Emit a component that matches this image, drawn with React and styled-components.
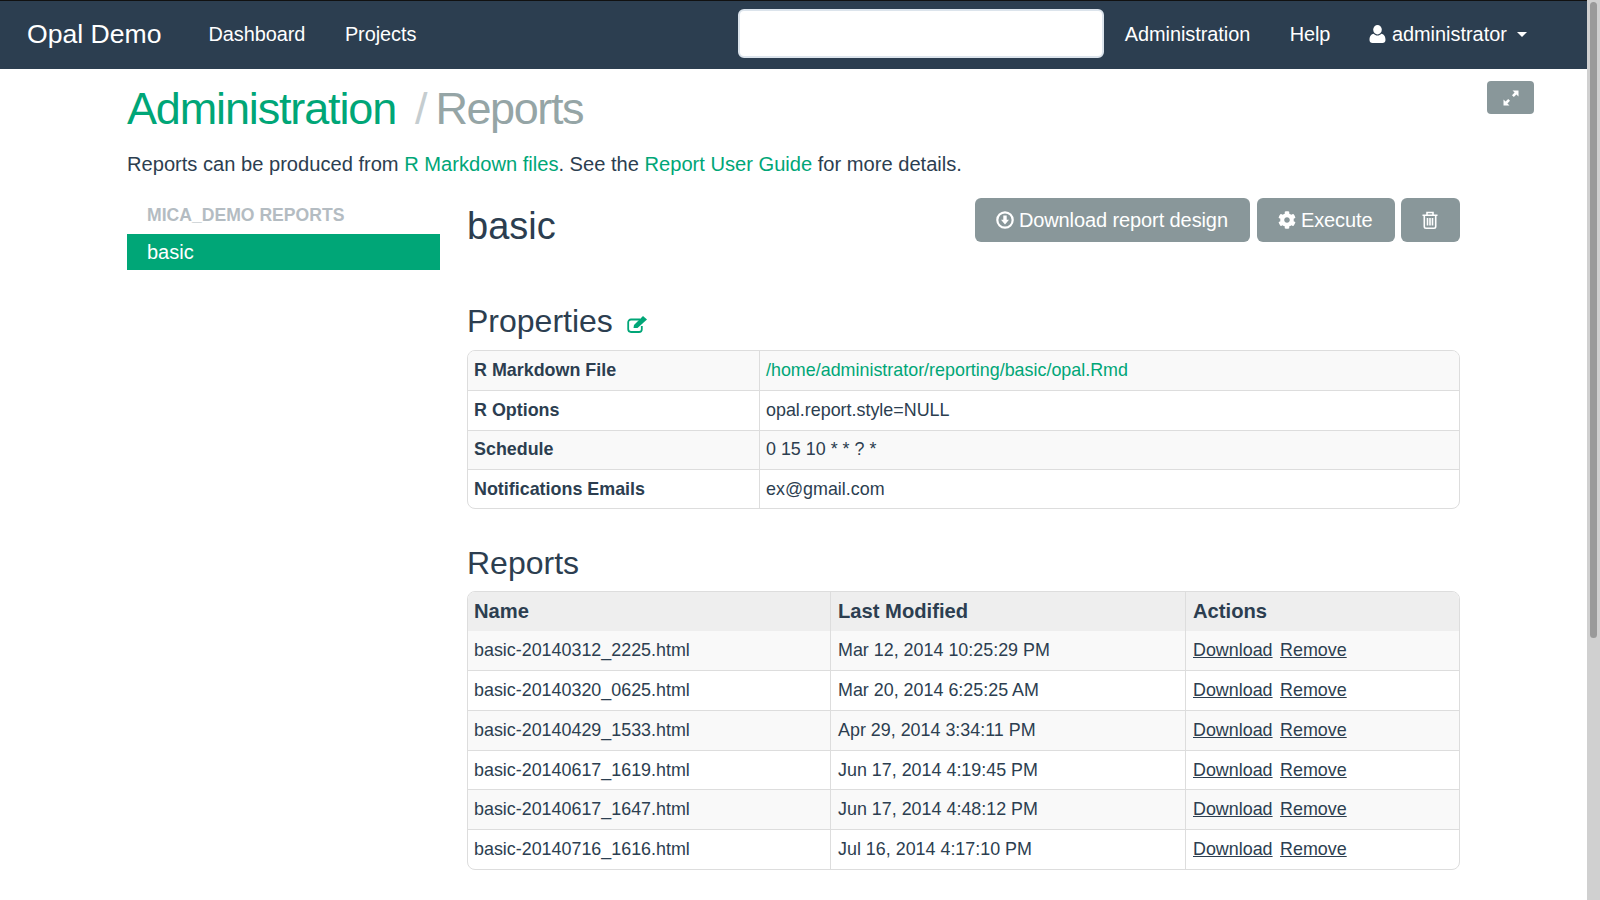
import React from 'react'
import styled, { createGlobalStyle } from 'styled-components'
import { FaCog } from 'react-icons/fa'

const rows = [
    ['basic-20140312_2225.html', 'Mar 12, 2014 10:25:29 PM'],
    ['basic-20140320_0625.html', 'Mar 20, 2014 6:25:25 AM'],
    ['basic-20140429_1533.html', 'Apr 29, 2014 3:34:11 PM'],
    ['basic-20140617_1619.html', 'Jun 17, 2014 4:19:45 PM'],
    ['basic-20140617_1647.html', 'Jun 17, 2014 4:48:12 PM'],
    ['basic-20140716_1616.html', 'Jul 16, 2014 4:17:10 PM'],
]

const props = [
    ['R Markdown File', '/home/administrator/reporting/basic/opal.Rmd', true],
    ['R Options', 'opal.report.style=NULL'],
    ['Schedule', '0 15 10 * * ? *'],
    ['Notifications Emails', 'ex@gmail.com'],
]

function App() {
    return (
        <Page>
            <GlobalStyle />
            <Navbar>
                <Brand>Opal Demo</Brand>
                <NavLink>Dashboard</NavLink>
                <NavLink>Projects</NavLink>
                <Search />
                <NavLink>Administration</NavLink>
                <NavLink>Help</NavLink>
                <UserMenu>
                    <svg width="17" height="18" viewBox="0 0 17 18" fill="#fff">
                        <ellipse cx="8.500" cy="4.800" rx="4.300" ry="4.700" />
                        <path d="M0.500 15c0-4 2-5.800 4.200-6.200 1 1.200 2.300 1.800 3.800 1.800s2.800-.6 3.800-1.800c2.200.4 4.200 2.200 4.200 6.200 0 2-1.300 3-3 3H3.500c-1.700 0-3-1-3-3z" />
                    </svg>
                    <span>administrator</span>
                    <Caret />
                </UserMenu>
            </Navbar>
            <Content>
                <ExpandBtn>
                    <svg width="16" height="16" viewBox="0 0 16 16" fill="#fff">
                        <path d="M9.500 .5h6v6l-2.100-2.100-2.600 2.600-1.800-1.800 2.600-2.600zM6.500 15.500h-6v-6l2.100 2.100 2.600-2.600 1.800 1.800-2.600 2.600z" />
                    </svg>
                </ExpandBtn>
                <Title>
                    <a>Administration</a>
                    <Slash>/</Slash>
                    <Crumb>Reports</Crumb>
                </Title>
                <Intro>
                    Reports can be produced from <TextLink>R Markdown files</TextLink>. See the <TextLink>Report User Guide</TextLink> for more details.
                </Intro>
                <Columns>
                    <Sidebar>
                        <SideHeader>MICA_DEMO REPORTS</SideHeader>
                        <SideItem>basic</SideItem>
                    </Sidebar>
                    <Main>
                        <MainHead>
                            <h2>basic</h2>
                            <Actions>
                                <Button>
                                    <svg width="18" height="18" viewBox="0 0 18 18" fill="none" stroke="#fff">
                                        <circle cx="9" cy="9" r="7.700" strokeWidth="2.200" />
                                        <path d="M7.300 4.500h3.400v4.200h2.300L9 13.500 5 8.700h2.300z" fill="#fff" stroke="none" />
                                    </svg>
                                    Download report design
                                </Button>
                                <Button>
                                    <FaCog size={18} />
                                    Execute
                                </Button>
                                <Button>
                                    <svg width="16" height="18" viewBox="0 0 16 18" fill="none" stroke="#fff" strokeWidth="1.600">
                                        <path d="M.5 4.200h15M5 4V1.500h6V4M2.300 4.200v11.300c0 1 .7 1.700 1.700 1.700h8c1 0 1.700-.7 1.700-1.700V4.200M5.500 7v7.500M8 7v7.500M10.500 7v7.500" />
                                    </svg>
                                </Button>
                            </Actions>
                        </MainHead>
                        <SectionTitle $top={51} $bottom={8}>
                            Properties
                            <EditIcon width="21" height="17" viewBox="0 0 21 17" fill="none">
                                <path d="M13 3.500H4A2.800 2.800 0 0 0 1.200 6.300v7A2.800 2.800 0 0 0 4 16h8a2.800 2.800 0 0 0 2.800-2.800V10" stroke="#00a677" strokeWidth="1.800" />
                                <path d="M6.500 12 7 9 16 0l4 3.500-9.500 8.500z" fill="#00a677" />
                            </EditIcon>
                        </SectionTitle>
                        <Table $rowHeight={39.3} $gutter={6}>
                            <tbody>
                                {props.map(([label, value, link]) => (
                                    <tr key={label}>
                                        <th style={{ width: 291 }}>{label}</th>
                                        <td>{link ? <TextLink>{value}</TextLink> : value}</td>
                                    </tr>
                                ))}
                            </tbody>
                        </Table>
                        <SectionTitle $top={33} $bottom={7}>Reports</SectionTitle>
                        <Table $rowHeight={39.7} $gutter={7}>
                            <thead>
                                <tr>
                                    <th style={{ width: 362 }}>Name</th>
                                    <th style={{ width: 355 }}>Last Modified</th>
                                    <th>Actions</th>
                                </tr>
                            </thead>
                            <tbody>
                                {rows.map(([name, date]) => (
                                    <tr key={name}>
                                        <td>{name}</td>
                                        <td>{date}</td>
                                        <td>
                                            <RowLink>Download</RowLink>
                                            <RowLink>Remove</RowLink>
                                        </td>
                                    </tr>
                                ))}
                            </tbody>
                        </Table>
                    </Main>
                </Columns>
            </Content>
            <ScrollTrack>
                <ScrollThumb />
            </ScrollTrack>
        </Page>
    )
}

export default App

const GlobalStyle = createGlobalStyle`
body{
    margin:0;
    font-family:"Liberation Sans",Arial,sans-serif;
    color:#2c3e50;
    background:#fff;
}
`
const Page = styled.div`
min-height:1270px;
padding-right:13px;
`
const ScrollTrack = styled.div`
position:fixed;
top:0;
right:0;
bottom:0;
width:13px;
background:#d0d0d0;
`
const ScrollThumb = styled.div`
width:7px;
height:636px;
margin:2px 0 0 3px;
background:#9a9a9a;
border-radius:4px;
`
const Navbar = styled.div`
display:flex;
align-items:center;
height:66px;
background:#2c3e50;
border-top:1px solid #111;
padding:0 0 2px 27px;
color:#fff;
`
const Brand = styled.a`
font-size:26.600px;
margin-right:47px;
`
const NavLink = styled.a`
font-size:19.900px;
letter-spacing:-.05px;
margin-right:39.500px;
`
const Search = styled.div`
width:366px;
height:49px;
box-sizing:border-box;
margin:-1px 21px 0 282px;
background:#fff;
border-radius:6px;
border:2px solid #dce4ec;
`
const UserMenu = styled.a`
display:flex;
align-items:center;
gap:6px;
margin-left:-1px;
font-size:19.900px;
`
const Caret = styled.span`
width:0;
height:0;
margin-left:4px;
border-left:5px solid transparent;
border-right:5px solid transparent;
border-top:5px solid #fff;
`
const Content = styled.div`
position:relative;
padding:0 127px;
`
const ExpandBtn = styled.div`
position:absolute;
top:12px;
right:53px;
width:47px;
height:33px;
display:flex;
align-items:center;
justify-content:center;
background:#89979a;
border-radius:4px;
`
const Title = styled.h1`
margin:0;
padding-top:14px;
font-size:45px;
line-height:52px;
font-weight:400;
letter-spacing:-1.150px;
color:#95a5a6;
a{
    color:#00a677;
}
`
const Crumb = styled.span`
letter-spacing:-1.400px;
`
const Slash = styled.span`
color:#c5cdd0;
margin:0 9px 0 19px;
`
const Intro = styled.p`
margin:15px 0 0;
font-size:20.130px;
line-height:28px;
`
const TextLink = styled.a`
color:#00a677;
`
const Columns = styled.div`
display:flex;
margin-top:16px;
`
const Sidebar = styled.div`
width:313px;
flex:none;
padding-top:7px;
`
const SideHeader = styled.div`
padding:0 20px;
height:28px;
line-height:28px;
font-size:17.600px;
font-weight:700;
color:#b4bcc2;
`
const SideItem = styled.div`
margin-top:5px;
height:36px;
line-height:36px;
padding:0 20px;
font-size:20px;
color:#fff;
background:#00a677;
`
const Main = styled.div`
flex:1;
margin-left:27px;
padding-top:4px;
h2{
    margin:0;
    padding-top:5px;
    font-size:38px;
    line-height:46px;
    font-weight:400;
}
`
const MainHead = styled.div`
display:flex;
justify-content:space-between;
align-items:flex-start;
`
const Actions = styled.div`
display:flex;
gap:6.500px;
`
const Button = styled.div`
display:flex;
align-items:center;
gap:4.500px;
height:44px;
padding:0 22px 0 21px;
font-size:20px;
letter-spacing:-.1px;
color:#fff;
background:#89979a;
border-radius:6px;
&:first-child{
    margin-right:1px;
}
`
const SectionTitle = styled.h3`
display:flex;
align-items:center;
gap:14px;
margin:${(p) => p.$top}px 0 ${(p) => p.$bottom}px;
font-size:32px;
line-height:42px;
font-weight:400;
`
const EditIcon = styled.svg`
margin-top:6px;
`
const Table = styled.table`
width:100%;
box-sizing:border-box;
table-layout:fixed;
border-collapse:separate;
border-spacing:0;
border:1px solid #ddd;
border-radius:8px;
overflow:hidden;
font-size:17.900px;
th,td{
    box-sizing:border-box;
    text-align:left;
    padding:0 6px 0 ${(p) => p.$gutter}px;
    height:${(p) => p.$rowHeight}px;
    border-left:1px solid #ddd;
    border-top:1px solid #ddd;
}
th:first-child,td:first-child{
    padding-left:6px;
    border-left:0;
}
tr:first-child th,tr:first-child td{
    border-top:0;
}
tbody tr:nth-child(odd) th,tbody tr:nth-child(odd) td{
    background:#f9f9f9;
}
thead th{
    height:38.500px;
    background:#eee;
    font-size:20.200px;
}
`
const RowLink = styled.a`
text-decoration:underline;
margin-right:7.500px;
`
